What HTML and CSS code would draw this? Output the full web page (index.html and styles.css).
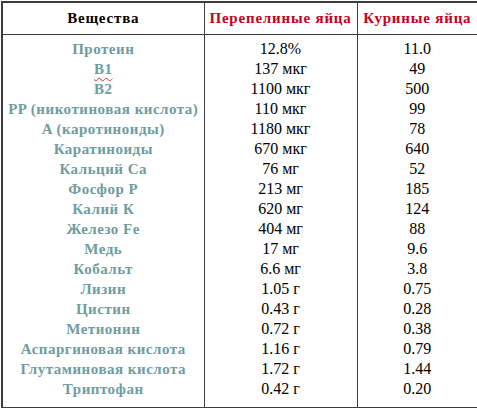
FILE: index.html
```html
<!DOCTYPE html>
<html>
<head>
<meta charset="utf-8">
<link rel="stylesheet" href="styles.css">
</head>
<body>
<table class="tbl">
  <colgroup>
    <col class="c1"><col class="c2"><col class="c3">
  </colgroup>
  <tr class="head">
    <th class="h-black">Вещества</th>
    <th class="h-red">Перепелиные яйца</th>
    <th class="h-red">Куриные яйца</th>
  </tr>
  <tr class="body">
    <td class="names">
      <div>Протеин</div>
      <div><span class="spell">B1</span></div>
      <div>B2</div>
      <div>PP (никотиновая кислота)</div>
      <div>A (каротиноиды)</div>
      <div>Каратиноиды</div>
      <div>Кальций Ca</div>
      <div>Фосфор P</div>
      <div>Калий К</div>
      <div>Железо Fe</div>
      <div>Медь</div>
      <div>Кобальт</div>
      <div>Лизин</div>
      <div>Цистин</div>
      <div>Метионин</div>
      <div>Аспаргиновая кислота</div>
      <div>Глутаминовая кислота</div>
      <div>Триптофан</div>
    </td>
    <td class="vals">
      <div>12.8%</div>
      <div>137 мкг</div>
      <div>1100 мкг</div>
      <div>110 мкг</div>
      <div>1180 мкг</div>
      <div>670 мкг</div>
      <div>76 мг</div>
      <div>213 мг</div>
      <div>620 мг</div>
      <div>404 мг</div>
      <div>17 мг</div>
      <div>6.6 мг</div>
      <div>1.05 г</div>
      <div>0.43 г</div>
      <div>0.72 г</div>
      <div>1.16 г</div>
      <div>1.72 г</div>
      <div>0.42 г</div>
    </td>
    <td class="vals">
      <div>11.0</div>
      <div>49</div>
      <div>500</div>
      <div>99</div>
      <div>78</div>
      <div>640</div>
      <div>52</div>
      <div>185</div>
      <div>124</div>
      <div>88</div>
      <div>9.6</div>
      <div>3.8</div>
      <div>0.75</div>
      <div>0.28</div>
      <div>0.38</div>
      <div>0.79</div>
      <div>1.44</div>
      <div>0.20</div>
    </td>
  </tr>
</table>
</body>
</html>
```
FILE: styles.css
```css
html, body {
  margin: 0;
  padding: 0;
  background: #ffffff;
}
body {
  padding: 1px 0 0 1px;
  font-family: "Liberation Serif";
}
.tbl {
  border-collapse: collapse;
  width: 476px;
  table-layout: fixed;
  border: 2px solid #3c3c3c;
  font-family: "Liberation Serif";
}
.c1 { width: 202px; }
.c2 { width: 153px; }
.c3 { width: 121px; }
.cell-font {
  font-family: "Liberation Serif";
}
.tbl th, .tbl td {
  border: 1px solid #3c3c3c;
  padding: 0;
  text-align: center;
  font-family: "Liberation Serif";
}
.head th {
  height: 31px;
  font-size: 15px;
  font-weight: bold;
  letter-spacing: 0.8px;
  vertical-align: middle;
}
.h-black { color: #000000; }
.h-red { color: #c8001e; }
.body td {
  vertical-align: top;
  padding: 4px 0 8px 0;
}
.body td div {
  height: 20px;
  line-height: 20px;
  white-space: nowrap;
  font-family: "Liberation Serif";
}
.names {
  color: #6f9c9e;
  font-weight: bold;
  font-size: 15px;
  letter-spacing: 0.5px;
}
.vals {
  color: #000000;
  font-size: 16px;
  font-weight: normal;
}
.spell {
  text-decoration: underline wavy #e0303a;
  text-decoration-thickness: 1px;
  text-underline-offset: 3px;
}
```
